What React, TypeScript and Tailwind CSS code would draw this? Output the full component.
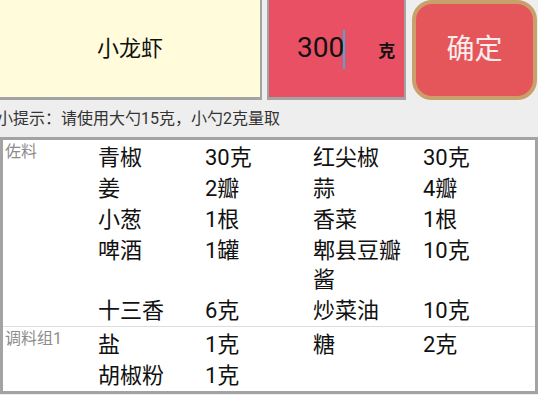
const groups: { label: string; items: [string, string][] }[] = [
  {
    label: "佐料",
    items: [
      ["青椒", "30克"],
      ["红尖椒", "30克"],
      ["姜", "2瓣"],
      ["蒜", "4瓣"],
      ["小葱", "1根"],
      ["香菜", "1根"],
      ["啤酒", "1罐"],
      ["郫县豆瓣酱", "10克"],
      ["十三香", "6克"],
      ["炒菜油", "10克"],
    ],
  },
  {
    label: "调料组1",
    items: [
      ["盐", "1克"],
      ["糖", "2克"],
      ["胡椒粉", "1克"],
    ],
  },
];

export default function App() {
  return (
    <div
      className="h-[395px] w-[538px] overflow-hidden bg-[#eeeeee]"
      style={{ fontFamily: "Roboto, 'Noto Sans CJK SC', sans-serif" }}
    >
      {/* top row: dish, weight input, confirm */}
      <div className="flex h-[100px]">
        <div className="flex h-full w-[262px] items-center justify-center border-r-2 border-b-[3px] border-[#a3a3a3] bg-[#fffbdb] text-[22px] text-[#111]">
          小龙虾
        </div>
        <div className="ml-[5px] flex h-full w-[139px] items-baseline border-x-2 border-b-[3px] border-[#a3a3a3] bg-[#ea5064] pl-[28px] pt-[30px]">
          <span className="text-[28px] leading-[36px] text-[#111]">300</span>
          <span className="-ml-px h-[39px] w-[2px] self-start bg-[#4fa6d6]" />
          <span className="ml-[33px] text-[17px] font-bold text-[#111]">克</span>
        </div>
        <button className="ml-[6px] flex h-[100px] w-[125px] items-center justify-center rounded-[20px] border-4 border-[#c9a06c] bg-[#e5565b] text-[28px] text-[#f8ecec]">
          确定
        </button>
      </div>

      <div className="-ml-[3px] flex h-[37px] items-center text-[16px] text-[#333333]">
        小提示：请使用大勺15克，小勺2克量取
      </div>

      {/* ingredient list */}
      <div className="border-x-[3px] border-y-[3px] border-[#a3a3a3] bg-white">
        {groups.map((g, gi) => (
          <div key={g.label} className={gi > 0 ? "flex border-t border-[#dddddd] pt-[2px]" : "flex pt-[2px]"}>
            <div className="w-[95px] shrink-0 pl-[2px] text-[16px] leading-[19px] text-[#8c8c8c]">{g.label}</div>
            <div className="grid flex-1 grid-cols-[107px_108px_110px_1fr] text-[22px] leading-[29px] text-[#111]">
              {g.items.flatMap(([name, qty]) => [
                <div key={name} className="py-px pr-1">{name}</div>,
                <div key={name + "q"} className="py-px pr-1">{qty}</div>,
              ])}
            </div>
          </div>
        ))}
      </div>
    </div>
  );
}
